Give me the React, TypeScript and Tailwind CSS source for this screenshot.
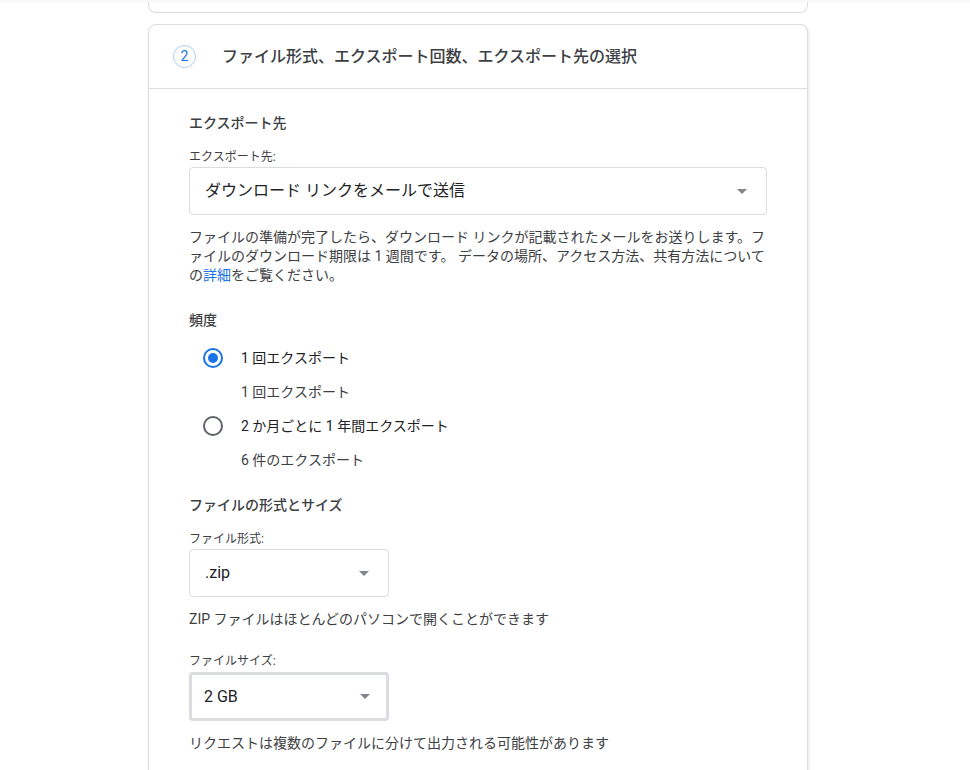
import React from "react";

const font = { fontFamily: '"Roboto", "Noto Sans CJK JP", "Noto Sans", sans-serif' };

function Arrow() {
  return (
    <svg width="10" height="5" viewBox="0 0 10 5" className="shrink-0">
      <path d="M0 0 L10 0 L5 5 Z" fill="#80868b" />
    </svg>
  );
}

function Select({ value, wide, focused }: { value: string; wide?: boolean; focused?: boolean }) {
  return (
    <div
      className={
        "flex items-center justify-between rounded-[4px] bg-white " +
        (wide ? "w-[578px] " : "w-[200px] ") +
        (focused
          ? "h-[49px] border-[3px] border-[#dadce0] pl-[12px] pr-[16px]"
          : "h-[48px] border border-[#dadce0] pl-[15px] pr-[19px]")
      }
    >
      <span className="text-[16px] text-[#202124]">{value}</span>
      <Arrow />
    </div>
  );
}

function Radio({ checked }: { checked?: boolean }) {
  return checked ? (
    <div className="w-[20px] h-[20px] rounded-full border-2 border-[#1a73e8] flex items-center justify-center">
      <div className="w-[10px] h-[10px] rounded-full bg-[#1a73e8]" />
    </div>
  ) : (
    <div className="w-[20px] h-[20px] rounded-full border-2 border-[#5f6368]" />
  );
}

export default function App() {
  return (
    <div className="min-h-[770px] bg-white" style={font}>
      <div className="h-[2px] bg-[#f7f7f7]" />
      <div className="ml-[148px] w-[660px]">
        <div className="h-[11px] border-x border-b border-[#dadce0] rounded-b-[8px] bg-white" />
        <div className="mt-[11px] border border-[#dadce0] rounded-t-[8px] bg-white shadow-[1px_1px_2px_rgba(60,64,67,0.12)] min-h-[760px]">
          <div className="h-[64px] border-b border-[#dadce0] flex items-center pl-[24px]">
            <div className="w-[23px] h-[23px] rounded-full border border-[#aecbfa] flex items-center justify-center text-[14px] text-[#1a73e8]">
              2
            </div>
            <div className="ml-[26px] text-[16px] font-medium text-[#3c4043]">
              ファイル形式、エクスポート回数、エクスポート先の選択
            </div>
          </div>

          <div className="pl-[40px] pr-[40px] pt-[24px]">
            <div className="text-[14px] leading-[20px] font-medium text-[#3c4043]">エクスポート先</div>
            <div className="mt-[16px] text-[12px] leading-[16px] text-[#3c4043]">エクスポート先:</div>
            <div className="mt-[2px]">
              <Select value="ダウンロード リンクをメールで送信" wide />
            </div>
            <p className="mt-[13px] text-[14px] leading-[19px] text-[#3c4043]">
              ファイルの準備が完了したら、ダウンロード リンクが記載されたメールをお送りします。ファイルのダウンロード期限は 1 週間です。 データの場所、アクセス方法、共有方法についての<span className="text-[#1a73e8]">詳細</span>をご覧ください。
            </p>

            <div className="mt-[25px] text-[14px] leading-[20px] font-medium text-[#3c4043]">頻度</div>
            <div className="mt-[11px] flex flex-col">
              <div className="h-[34px] flex items-center pl-[14px]">
                <Radio checked />
                <span className="ml-[18px] text-[14px] text-[#202124]">1 回エクスポート</span>
              </div>
              <div className="h-[34px] flex items-center pl-[52px] text-[14px] text-[#3c4043]">1 回エクスポート</div>
              <div className="h-[34px] flex items-center pl-[14px]">
                <Radio />
                <span className="ml-[18px] text-[14px] text-[#202124]">2 か月ごとに 1 年間エクスポート</span>
              </div>
              <div className="h-[34px] flex items-center pl-[52px] text-[14px] text-[#3c4043]">6 件のエクスポート</div>
            </div>

            <div className="mt-[18px] text-[14px] leading-[20px] font-medium text-[#3c4043]">ファイルの形式とサイズ</div>
            <div className="mt-[16px] text-[12px] leading-[16px] text-[#3c4043]">ファイル形式:</div>
            <div className="mt-[2px]">
              <Select value=".zip" />
            </div>
            <p className="mt-[12px] text-[14px] leading-[20px] text-[#3c4043]">ZIP ファイルはほとんどのパソコンで開くことができます</p>
            <div className="mt-[24px] text-[12px] leading-[16px] text-[#3c4043]">ファイルサイズ:</div>
            <div className="mt-[3px]">
              <Select value="2 GB" focused />
            </div>
            <p className="mt-[12px] text-[14px] leading-[20px] text-[#3c4043]">リクエストは複数のファイルに分けて出力される可能性があります</p>
          </div>
        </div>
      </div>
    </div>
  );
}
